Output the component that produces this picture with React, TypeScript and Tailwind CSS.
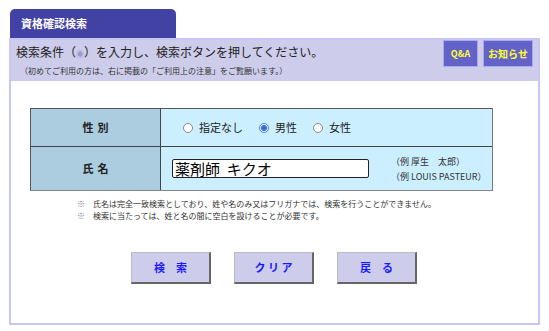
import React, { useState } from 'react';

const jp = '"Noto Sans CJK JP", "DejaVu Sans", sans-serif';

const Radio: React.FC<{ checked: boolean; label: string; onClick: () => void }> = ({ checked, label, onClick }) => (
  <label className="flex items-center gap-[6px] cursor-pointer" onClick={onClick}>
    <span
      className={`w-[10px] h-[10px] rounded-full border flex items-center justify-center bg-white ${
        checked ? 'border-[#3b7be8]' : 'border-[#8a8a8a]'
      }`}
    >
      {checked && <span className="w-[6px] h-[6px] rounded-full bg-[#2f6fe0]" />}
    </span>
    <span>{label}</span>
  </label>
);

export default function App() {
  const [gender, setGender] = useState<'none' | 'male' | 'female'>('male');
  const [name, setName] = useState('薬剤師  キクオ');

  return (
    <div className="w-[549px] h-[331px] bg-white pt-[9px] pl-[9px]" style={{ fontFamily: jp }}>
      {/* タブ */}
      <div className="w-[166px] h-[29px] rounded-t-[5px] bg-[#4242a4] flex items-center pl-[11px] text-white text-[11px] font-bold ml-[1px]">
        資格確認検索
      </div>

      <div className="w-[531px] h-[287px] border-2 border-[#c6c6f6] bg-white">
        {/* 説明 */}
        <div className="h-[41px] bg-[#cdcdeb] flex justify-between">
          <div className="pl-[5px] pt-[4px]">
            <div className="text-[12px] leading-[16px] text-[#222]">
              検索条件（<span className="text-[#9a9ad0] text-[8px]">◉</span>）を入力し、検索ボタンを押してください。
            </div>
            <div className="text-[8px] leading-[12px] text-[#333] pl-[4px] mt-[3px]">
              （初めてご利用の方は、右に掲載の「ご利用上の注意」をご覧願います。）
            </div>
          </div>
          <div className="flex gap-[5px] pr-[5px]">
            <button className="w-[35px] h-[27px] bg-[#6262c9] border border-[#a9a9ee] text-[#ffff33] text-[9px] font-bold">
              Q&amp;A
            </button>
            <button className="w-[50px] h-[27px] bg-[#6262c9] border border-[#a9a9ee] text-[#ffff33] text-[10px] font-bold">
              お知らせ
            </button>
          </div>
        </div>

        {/* 入力表 */}
        <div className="pl-[19px] pt-[27px]">
          <div className="w-[463px] border border-[#555] border-b-[#888] border-r-[#777]">
            <div className="flex h-[38px] border-b border-[#444]">
              <div className="w-[130px] bg-[#abcddf] border-r border-[#444] flex items-center justify-center text-[11px] font-bold text-[#222] tracking-[4px] pl-[4px]">
                性別
              </div>
              <div className="flex-1 bg-[#ccefff] flex items-center gap-[16px] pl-[22px] text-[11px] text-[#222]">
                <Radio checked={gender === 'none'} label="指定なし" onClick={() => setGender('none')} />
                <Radio checked={gender === 'male'} label="男性" onClick={() => setGender('male')} />
                <Radio checked={gender === 'female'} label="女性" onClick={() => setGender('female')} />
              </div>
            </div>
            <div className="flex h-[43px]">
              <div className="w-[130px] bg-[#abcddf] border-r border-[#444] flex items-center justify-center text-[11px] font-bold text-[#222] tracking-[4px] pl-[4px]">
                氏名
              </div>
              <div className="flex-1 bg-[#ccefff] flex items-center pl-[11px]">
                <input
                  value={name}
                  onChange={(e) => setName(e.target.value)}
                  className="w-[197px] h-[19px] bg-white border border-[#222] rounded-[2px] px-[2px] text-[15px] leading-[17px] text-black outline-none"
                  style={{ fontFamily: jp }}
                />
                <div className="ml-[22px] text-[9px] leading-[15px] text-[#333]">
                  <div>（例 厚生　太郎）</div>
                  <div>（例 LOUIS PASTEUR）</div>
                </div>
              </div>
            </div>
          </div>
        </div>

        {/* 注意 */}
        <div className="pl-[66px] pt-[7px] text-[8px] leading-[12px] text-[#333]">
          <div className="flex gap-[8px]">
            <span className="text-[#777]">※</span>
            <span>氏名は完全一致検索としており、姓や名のみ又はフリガナでは、検索を行うことができません。</span>
          </div>
          <div className="flex gap-[8px]">
            <span className="text-[#777]">※</span>
            <span>検索に当たっては、姓と名の間に空白を設けることが必要です。</span>
          </div>
        </div>

        {/* ボタン */}
        <div className="flex gap-[23px] pl-[120px] pt-[30px]">
          {['検　索', 'ク リ ア', '戻　る'].map((label) => (
            <button
              key={label}
              className="w-[80px] h-[32px] bg-[#cdcdeb] border border-[#bbb] border-r-[#666] border-b-[#666] border-r-2 border-b-2 text-[#1a1aff] text-[11px] font-bold"
            >
              {label}
            </button>
          ))}
        </div>
      </div>
    </div>
  );
}
